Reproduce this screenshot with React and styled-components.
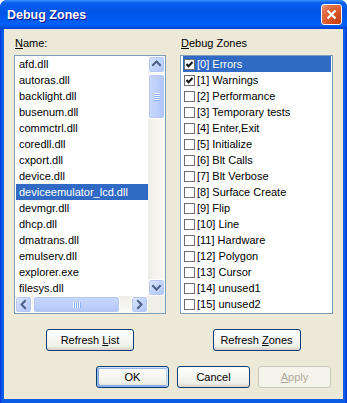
import React from 'react';
import styled, { createGlobalStyle } from 'styled-components';

const GlobalStyle = createGlobalStyle`
  html, body {
    margin: 0;
    padding: 0;
    background: #ffffff;
  }
  body {
    font-family: "Liberation Sans", Arial, sans-serif;
    font-size: 11px;
    color: #000000;
  }
`;

const Window = styled.div`
  width: 347px;
  height: 403px;
  display: flex;
  flex-direction: column;
  border-radius: 7px 7px 0 0;
  overflow: hidden;
  background: #0a5be6;
`;

const TitleBar = styled.div`
  height: 29px;
  flex: none;
  display: flex;
  align-items: center;
  justify-content: space-between;
  padding: 0 5px 0 7px;
  box-sizing: border-box;
  background: linear-gradient(
    180deg,
    #3d93ff 0%,
    #0a5fee 10%,
    #0055e8 45%,
    #0060f8 85%,
    #0052e0 93%,
    #003dd7 100%
  );
`;

const Title = styled.span`
  font-family: "Liberation Sans", Arial, sans-serif;
  font-weight: bold;
  font-size: 12.5px;
  color: #ffffff;
  text-shadow: 1px 1px #0f1089;
  padding-top: 1px;
`;

const CloseButton = styled.div`
  width: 21px;
  height: 21px;
  box-sizing: border-box;
  border: 1px solid #ffffff;
  border-radius: 3px;
  display: flex;
  align-items: center;
  justify-content: center;
  background: radial-gradient(circle at 85% 85%, #c8400f 0%, #dc5a2c 50%, #e47a55 80%, #f3b79d 100%);
  box-shadow: inset 0 0 1px #8a2a0a;
  margin-bottom: 1px;
`;

const Frame = styled.div`
  flex: 1;
  display: flex;
  padding: 0 4px 4px 4px;
  background: linear-gradient(90deg, #0831d9 0, #0a5be6 2px, #0a5be6 calc(100% - 2px), #0831d9 100%);
`;

const Client = styled.div`
  flex: 1;
  background: #ece9d8;
  padding: 8px 10px 11px 10px;
  display: flex;
  flex-direction: column;
`;

const Columns = styled.div`
  display: grid;
  grid-template-columns: 152px 153px;
  column-gap: 14px;
`;

const Label = styled.div`
  line-height: 13px;
  height: 13px;
  margin-bottom: 5px;
  padding-left: 1px;
`;

const Mnemonic = styled.span`
  text-decoration: underline;
  text-underline-offset: 1px;
`;

const ListBox = styled.div`
  height: 259px;
  box-sizing: border-box;
  border: 1px solid #7f9db9;
  background: #ffffff;
  display: grid;
  grid-template-columns: ${p => (p.$scroll ? '1fr 17px' : '1fr')};
  grid-template-rows: ${p => (p.$scroll ? '240px 17px' : '1fr')};
  padding-top: ${p => (p.$scroll ? '0' : '0')};
  overflow: hidden;
`;

const Items = styled.div`
  padding: 0 0 0 1px;
  overflow: hidden;
`;

const Item = styled.div`
  height: 16px;
  line-height: 16px;
  padding-left: 3px;
  white-space: nowrap;
  background: ${p => (p.$selected ? '#316ac5' : 'transparent')};
  color: ${p => (p.$selected ? '#ffffff' : '#000000')};
`;

const CheckItems = styled.div`
  padding: 0 1px 0 2px;
`;

const CheckRow = styled.div`
  height: 16px;
  display: flex;
  align-items: center;
  white-space: nowrap;
  background: ${p => (p.$selected ? '#316ac5' : 'transparent')};
  color: ${p => (p.$selected ? '#ffffff' : '#000000')};
`;

const Box = styled.div`
  width: 11px;
  height: 11px;
  box-sizing: border-box;
  border: 1px solid #6f6f6f;
  background: #ffffff;
  margin: 0 2px 0 1px;
  display: flex;
  align-items: center;
  justify-content: center;
  flex: none;
`;

const VScroll = styled.div`
  display: flex;
  flex-direction: column;
  background: linear-gradient(90deg, #eeede5, #fbfbf8);
`;

const HScroll = styled.div`
  display: flex;
  padding-left: 0;
  background: linear-gradient(180deg, #eeede5, #fbfbf8);
`;

const Corner = styled.div`
  background: #f0efe7;
`;

const ScrollButton = styled.div`
  width: 17px;
  height: 17px;
  flex: none;
  box-sizing: border-box;
  border: 1px solid #ffffff;
  border-radius: 3px;
  display: flex;
  align-items: center;
  justify-content: center;
  background: linear-gradient(135deg, #dce6fd 0%, #c3d4fc 50%, #b1c6f7 100%);
  box-shadow: inset 0 0 0 1px #b6c8f2;
`;

const Track = styled.div`
  flex: 1;
  display: flex;
  flex-direction: ${p => (p.$vertical ? 'column' : 'row')};
  padding: ${p => (p.$vertical ? '1px 0 0 0' : '0 0 0 1px')};
`;

const Thumb = styled.div`
  ${p => (p.$vertical ? 'height: 45px; width: 17px;' : 'width: 87px; height: 17px;')}
  box-sizing: border-box;
  border: 1px solid #ffffff;
  border-radius: 3px;
  display: flex;
  align-items: center;
  justify-content: center;
  background: ${p =>
    p.$vertical
      ? 'linear-gradient(90deg, #c9d8fc 0%, #bccffb 60%, #aec4f6 100%)'
      : 'linear-gradient(180deg, #c9d8fc 0%, #bccffb 60%, #aec4f6 100%)'};
  box-shadow: inset 0 0 0 1px #b6c8f2;
`;

const ButtonRow = styled.div`
  display: grid;
  grid-template-columns: 152px 153px;
  column-gap: 14px;
  justify-items: center;
  margin-top: 15px;
`;

const Footer = styled.div`
  display: flex;
  justify-content: flex-end;
  gap: 8px;
  margin-top: 15px;
  padding-right: 2px;
`;

const Button = styled.div`
  width: ${p => p.$w}px;
  height: 22px;
  box-sizing: border-box;
  border: 1px solid ${p => (p.$disabled ? '#c9c7ba' : '#003c74')};
  border-radius: 3px;
  display: flex;
  align-items: center;
  justify-content: center;
  font-size: 11px;
  color: ${p => (p.$disabled ? '#aca899' : '#000000')};
  background: ${p =>
    p.$disabled
      ? '#f5f4ea'
      : 'linear-gradient(180deg, #ffffff 0%, #f0f0ea 80%, #d6d0c5 100%)'};
  box-shadow: ${p =>
    p.$default
      ? 'inset -1px 1px #cee7ff, inset 1px 2px #98b8ea, inset -2px 2px #bcd4f6, inset 1px -1px #89ade4, inset 2px -2px #89ade4'
      : 'none'};
`;

const files = [
  'afd.dll',
  'autoras.dll',
  'backlight.dll',
  'busenum.dll',
  'commctrl.dll',
  'coredll.dll',
  'cxport.dll',
  'device.dll',
  'deviceemulator_lcd.dll',
  'devmgr.dll',
  'dhcp.dll',
  'dmatrans.dll',
  'emulserv.dll',
  'explorer.exe',
  'filesys.dll',
];

const zones = [
  'Errors',
  'Warnings',
  'Performance',
  'Temporary tests',
  'Enter,Exit',
  'Initialize',
  'Blt Calls',
  'Blt Verbose',
  'Surface Create',
  'Flip',
  'Line',
  'Hardware',
  'Polygon',
  'Cursor',
  'unused1',
  'unused2',
];

const Arrow = ({ dir }) => {
  const pts = {
    up: '4,8 7.5,4.5 11,8',
    down: '4,6 7.5,9.5 11,6',
    left: '9,4 5.5,7.5 9,11',
    right: '6,4 9.5,7.5 6,11',
  }[dir];
  return (
    <svg width="15" height="15" viewBox="0 0 15 15">
      <polyline points={pts} fill="none" stroke="#4d6185" strokeWidth="2" strokeLinecap="square" />
    </svg>
  );
};

const Grip = ({ vertical }) => (
  <svg width="8" height="8" viewBox="0 0 8 8">
    {[0, 2, 4, 6].map(i =>
      vertical ? (
        <line key={i} x1="1" y1={i + 0.5} x2="7" y2={i + 0.5} stroke="#eef3fe" strokeWidth="1" />
      ) : (
        <line key={i} x1={i + 0.5} y1="1" x2={i + 0.5} y2="7" stroke="#eef3fe" strokeWidth="1" />
      )
    )}
    {[1, 3, 5, 7].map(i =>
      vertical ? (
        <line key={'d' + i} x1="1" y1={i + 0.5} x2="7" y2={i + 0.5} stroke="#8cb0f8" strokeWidth="1" />
      ) : (
        <line key={'d' + i} x1={i + 0.5} y1="1" x2={i + 0.5} y2="7" stroke="#8cb0f8" strokeWidth="1" />
      )
    )}
  </svg>
);

const Check = () => (
  <svg width="9" height="9" viewBox="0 0 9 9">
    <polyline points="1.5,4 3.5,6.2 7.5,2" fill="none" stroke="#111111" strokeWidth="2" />
  </svg>
);

const App = () => {
  return (
    <>
      <GlobalStyle />
      <Window>
        <TitleBar>
          <Title>Debug Zones</Title>
          <CloseButton>
            <svg width="11" height="11" viewBox="0 0 11 11">
              <path d="M1.5 1.5 L9.5 9.5 M9.5 1.5 L1.5 9.5" stroke="#ffffff" strokeWidth="2.2" />
            </svg>
          </CloseButton>
        </TitleBar>
        <Frame>
          <Client>
            <Columns>
              <div>
                <Label>
                  <Mnemonic>N</Mnemonic>ame:
                </Label>
                <ListBox $scroll>
                  <Items>
                    {files.map(f => (
                      <Item key={f} $selected={f === 'deviceemulator_lcd.dll'}>
                        {f}
                      </Item>
                    ))}
                  </Items>
                  <VScroll>
                    <ScrollButton>
                      <Arrow dir="up" />
                    </ScrollButton>
                    <Track $vertical>
                      <Thumb $vertical>
                        <Grip vertical />
                      </Thumb>
                    </Track>
                    <ScrollButton>
                      <Arrow dir="down" />
                    </ScrollButton>
                  </VScroll>
                  <HScroll>
                    <ScrollButton>
                      <Arrow dir="left" />
                    </ScrollButton>
                    <Track>
                      <Thumb>
                        <Grip />
                      </Thumb>
                    </Track>
                    <ScrollButton>
                      <Arrow dir="right" />
                    </ScrollButton>
                  </HScroll>
                  <Corner />
                </ListBox>
              </div>
              <div>
                <Label>
                  <Mnemonic>D</Mnemonic>ebug Zones
                </Label>
                <ListBox>
                  <CheckItems>
                    {zones.map((z, i) => (
                      <CheckRow key={z} $selected={i === 0}>
                        <Box>{i < 2 && <Check />}</Box>
                        [{i}] {z}
                      </CheckRow>
                    ))}
                  </CheckItems>
                </ListBox>
              </div>
            </Columns>
            <ButtonRow>
              <Button $w={88}>
                Refresh&nbsp;<Mnemonic>L</Mnemonic>ist
              </Button>
              <Button $w={88}>
                Refresh&nbsp;<Mnemonic>Z</Mnemonic>ones
              </Button>
            </ButtonRow>
            <Footer>
              <Button $w={73} $default>
                OK
              </Button>
              <Button $w={73}>Cancel</Button>
              <Button $w={73} $disabled>
                <Mnemonic>A</Mnemonic>pply
              </Button>
            </Footer>
          </Client>
        </Frame>
      </Window>
    </>
  );
};

export default App;
